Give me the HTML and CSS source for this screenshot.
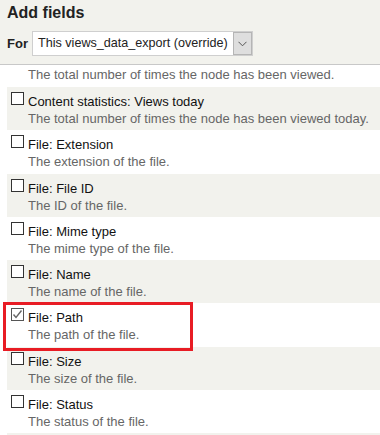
FILE: index.html
```html
<!DOCTYPE html>
<html lang="en">
<head>
  <meta charset="UTF-8">
  <meta name="viewport" content="width=device-width, initial-scale=1.0">
  <title>Add fields</title>
  <link rel="stylesheet" href="styles.css">
</head>
<body>

  <div class="top">
    <h2>Add fields</h2>
    <div class="for-line">
      <span class="for-label">For</span>
      <div class="select">
        <span class="select-text">This views_data_export (override)</span>
        <span class="select-btn">
          <svg width="9" height="6" viewBox="0 0 9 6"><polyline points="0.5,0.8 4.5,4.8 8.5,0.8" fill="none" stroke="#555" stroke-width="1"/></svg>
        </span>
      </div>
    </div>
  </div>

  <div class="fields">
    <div class="row cut">
      <div class="desc">The total number of times the node has been viewed.</div>
    </div>

    <div class="row odd">
      <div class="label"><span class="box"></span>Content statistics: Views today</div>
      <div class="desc">The total number of times the node has been viewed today.</div>
    </div>

    <div class="row">
      <div class="label"><span class="box"></span>File: Extension</div>
      <div class="desc">The extension of the file.</div>
    </div>

    <div class="row odd">
      <div class="label"><span class="box"></span>File: File ID</div>
      <div class="desc">The ID of the file.</div>
    </div>

    <div class="row">
      <div class="label"><span class="box"></span>File: Mime type</div>
      <div class="desc">The mime type of the file.</div>
    </div>

    <div class="row odd">
      <div class="label"><span class="box"></span>File: Name</div>
      <div class="desc">The name of the file.</div>
    </div>

    <div class="row marked">
      <div class="label">
        <span class="box checked">
          <svg width="11" height="11" viewBox="0 0 11 11"><polyline points="1.5,5.5 4,8.5 9.5,1.5" fill="none" stroke="#666" stroke-width="1.4"/></svg>
        </span>File: Path
      </div>
      <div class="desc">The path of the file.</div>
    </div>

    <div class="row odd">
      <div class="label"><span class="box"></span>File: Size</div>
      <div class="desc">The size of the file.</div>
    </div>

    <div class="row">
      <div class="label"><span class="box"></span>File: Status</div>
      <div class="desc">The status of the file.</div>
    </div>

    <div class="row-edge"></div>
  </div>

</body>
</html>
```

FILE: styles.css
```css
* {
  margin: 0;
  padding: 0;
  box-sizing: border-box;
}

body {
  font-family: "Liberation Sans", Arial, sans-serif;
  font-size: 13px;
  color: #222;
  background: #fff;
  overflow: hidden;
}

.top {
  background-color: #f2f2ed;
  border-bottom: 1px solid #c8c8c8;
  height: 65px;
  padding: 3px 0 0 7px;
}

.top h2 {
  font-size: 16px;
  font-weight: bold;
  line-height: 19px;
  color: #222;
}

.for-line {
  display: flex;
  align-items: center;
  margin-top: 9px;
}

.for-label {
  font-weight: bold;
  width: 25px;
}

.select {
  display: flex;
  align-items: stretch;
  width: 221px;
  height: 25px;
  background: #fff;
  border: 1px solid #cfcfcf;
}

.select-text {
  flex: 1;
  padding-left: 5px;
  font-size: 12.6px;
  line-height: 23px;
  color: #222;
  white-space: nowrap;
  overflow: hidden;
}

.select-btn {
  display: flex;
  align-items: center;
  justify-content: center;
  width: 19px;
  flex-shrink: 0;
  background: #dedede;
  border: 1px solid #b5b5b5;
}

.fields {
  padding-left: 7px;
}

.row {
  height: 43.3px;
  padding: 5px 0 0 21px;
  position: relative;
}

.row.odd {
  background-color: #f2f2ed;
}

.row.cut {
  height: 22px;
  padding-top: 2px;
}

.row-edge {
  height: 4px;
  background-color: #f2f2ed;
}

.label {
  line-height: 19px;
  color: #111;
  position: relative;
}

.desc {
  line-height: 16px;
  color: #666;
}

.box {
  position: absolute;
  left: -17px;
  top: 0;
  width: 13px;
  height: 13px;
  border: 1px solid #333;
  background: #fff;
}

.box.checked {
  border-color: #555;
}

.box svg {
  display: block;
}

.row.marked {
  z-index: 1;
}

.row.marked::after {
  content: "";
  position: absolute;
  left: -4px;
  top: -1px;
  width: 184px;
  bottom: -4px;
  border: 3px solid #e81c24;
}
```
